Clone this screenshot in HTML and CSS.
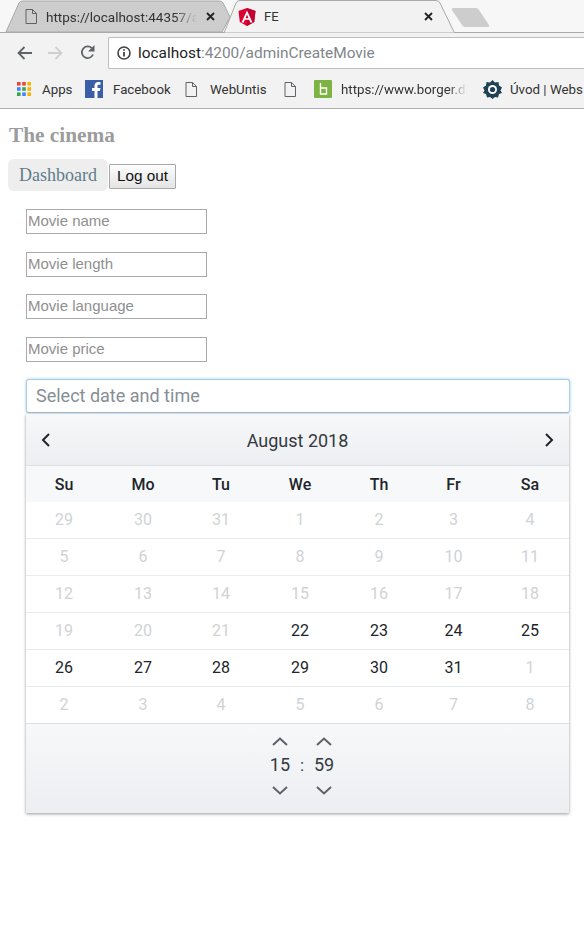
FILE: index.html
```html
<!DOCTYPE html>
<html lang="en">
<head>
    <meta charset="UTF-8">
    <meta name="viewport" content="width=device-width, initial-scale=1.0">
    <title>FE</title>
    <link rel="stylesheet" href="styles.css">
</head>
<body>

<header class="chrome">
    <div class="tabstrip">
        <svg class="tabshapes" width="584" height="33" viewBox="0 0 584 33">
            <path d="M6 32 L19 3 Q20 1 23 1 L219 1 Q222 1 223 3 L230 17 L222 32 Z" fill="#cdcdcd" stroke="#a9a9a9"/>
            <path d="M0 32.5 H224 M454 32.5 H584" stroke="#a9a9a9" fill="none"/>
            <path d="M224 33 L236 3 Q237 .5 240 .5 L436 .5 Q439 .5 440 3 L454 32 L455 33 Z" fill="#f2f2f2" stroke="#a9a9a9"/>
            <path d="M452 10 Q451 8 454 8 L476 8 Q478 8 479 10 L489 25 Q490 27 487 27 L465 27 Q463 27 462 25 Z" fill="#cdcdcd"/>
        </svg>
        <div class="tab tab-back">
            <svg class="tabicon" width="12" height="15" viewBox="0 0 12 15"><path d="M1 .5 H7.5 L11.5 4.5 V14.5 H1 Z M7.5 .5 V4.5 H11.5" fill="none" stroke="#5f6368"/></svg>
            <span class="tabtitle">https://localhost:44357/api</span>
            <svg class="tabclose" width="9" height="9" viewBox="0 0 9 9"><path d="M1 1 L8 8 M8 1 L1 8" stroke="#222" stroke-width="1.8"/></svg>
        </div>
        <div class="tab tab-front">
            <svg width="18" height="18" viewBox="0 0 18 18"><path d="M9 0 L17.5 3 L16.2 14 L9 18 L1.8 14 L.5 3 Z" fill="#dd0031"/><path d="M9 0 L17.5 3 L16.2 14 L9 18 Z" fill="#c3002f"/><path d="M9 2.500 L3.500 14.500 H5.700 L6.800 11.800 H11.200 L12.300 14.500 H14.500 Z M9 6.500 L10.500 10.200 H7.500 Z" fill="#fff" fill-rule="evenodd"/></svg>
            <span class="tabname">FE</span>
            <svg class="tabclose" width="9" height="9" viewBox="0 0 9 9"><path d="M1 1 L8 8 M8 1 L1 8" stroke="#222" stroke-width="1.8"/></svg>
        </div>
    </div>

    <div class="toolbar">
        <svg class="navicon nav-back" width="15" height="14" viewBox="0 0 15 14"><path d="M15 7 H2 M7.5 1 L1.500 7 L7.5 13" fill="none" stroke="#5f6368" stroke-width="1.800"/></svg>
        <svg class="navicon nav-fwd" width="15" height="14" viewBox="0 0 15 14"><path d="M0 7 H13 M7.5 1 L13.500 7 L7.5 13" fill="none" stroke="#cfcfcf" stroke-width="1.800"/></svg>
        <svg class="navicon nav-reload" width="15" height="15" viewBox="0 0 15 15"><path d="M13 9.500 A5.800 5.800 0 1 1 11.800 3.200" fill="none" stroke="#5f6368" stroke-width="1.800"/><path d="M14.500 0 V6.500 H8 Z" fill="#5f6368"/></svg>
        <div class="omnibox">
            <svg width="14" height="14" viewBox="0 0 14 14"><circle cx="7" cy="7" r="6" fill="none" stroke="#444" stroke-width="1.6"/><path d="M7 6 V10.5 M7 3.2 V4.8" stroke="#444" stroke-width="1.8"/></svg>
            <span class="url"><b>localhost</b>:4200/adminCreateMovie</span>
        </div>
    </div>

    <div class="bookmarks">
        <span class="bookmark bm-apps">
            <svg width="16" height="16" viewBox="0 0 16 16">
                <rect x="1" y="1" width="3.6" height="3.6" fill="#e8453c"/><rect x="6.2" y="1" width="3.6" height="3.6" fill="#e8453c"/><rect x="11.4" y="1" width="3.6" height="3.6" fill="#f4b400"/>
                <rect x="1" y="6.2" width="3.6" height="3.6" fill="#4285f4"/><rect x="6.2" y="6.2" width="3.6" height="3.6" fill="#34a853"/><rect x="11.4" y="6.2" width="3.6" height="3.6" fill="#f4b400"/>
                <rect x="1" y="11.4" width="3.6" height="3.6" fill="#34a853"/><rect x="6.2" y="11.4" width="3.6" height="3.6" fill="#4285f4"/><rect x="11.4" y="11.4" width="3.6" height="3.6" fill="#f4b400"/>
            </svg>
            Apps
        </span>
        <span class="bookmark bm-fb">
            <svg width="18" height="18" viewBox="0 0 18 18"><rect width="18" height="18" fill="#3b5ea8"/><path d="M12.5 18 V11 H15 L15.4 8 H12.5 V6.2 C12.5 5.3 12.8 4.8 14 4.8 H15.5 V2.2 C15 2.1 14.2 2 13.2 2 C11 2 9.5 3.3 9.5 5.800 V8 H7 V11 H9.500 V18 Z" fill="#fff"/></svg>
            Facebook
        </span>
        <span class="bookmark bm-web">
            <svg width="12" height="15" viewBox="0 0 12 15"><path d="M1 .5 H7.5 L11.500 4.5 V14.5 H1 Z M7.5 .5 V4.500 H11.500" fill="none" stroke="#5f6368"/></svg>
            WebUntis
        </span>
        <span class="bookmark bm-doc">
            <svg width="12" height="15" viewBox="0 0 12 15"><path d="M1 .5 H7.5 L11.500 4.5 V14.5 H1 Z M7.5 .5 V4.500 H11.500" fill="none" stroke="#5f6368"/></svg>
        </span>
        <span class="bookmark bm-borger">
            <svg width="18" height="18" viewBox="0 0 18 18"><rect width="18" height="18" rx="1" fill="#7cb342"/><path d="M6.500 3 V14 H12.500 V8 H6.500" fill="none" stroke="#fff" stroke-width="1.400"/></svg>
            <span class="bmfade">https://www.borger.dk</span>
        </span>
        <span class="bookmark bm-uvod">
            <svg width="19" height="19" viewBox="0 0 19 19"><path d="M9.500 0 L12 2.500 L15.500 2 L16 5.500 L19 7.500 L17.500 10.500 L19 13 L16 14 L15 17.500 L12 17 L9.500 19 L7 17 L4 17.500 L3 14 L0 13 L1.500 10.500 L0 7.500 L3 5.500 L3.500 2 L7 2.500 Z" fill="#1f4257"/><circle cx="9.500" cy="9.500" r="4.500" fill="#fff"/><circle cx="9.500" cy="9.500" r="2.600" fill="#1f4257"/></svg>
            Úvod | Webs
        </span>
    </div>
</header>

<main class="page">
    <h3 class="brand">The cinema</h3>
    <nav class="menu">
        <a class="menu-link">Dashboard</a>
        <button class="logout">Log out</button>
    </nav>

    <form class="movieform">
        <input class="field" placeholder="Movie name">
        <input class="field" placeholder="Movie length">
        <input class="field" placeholder="Movie language">
        <input class="field" placeholder="Movie price">

        <input class="dateinput" placeholder="Select date and time">
        <div class="calendar">
            <div class="cal-head">
                <svg width="10" height="14" viewBox="0 0 10 14"><path d="M8 1 L2 7 L8 13" fill="none" stroke="#212529" stroke-width="2"/></svg>
                <span class="cal-month">August 2018</span>
                <svg width="10" height="14" viewBox="0 0 10 14"><path d="M2 1 L8 7 L2 13" fill="none" stroke="#212529" stroke-width="2"/></svg>
            </div>
            <table class="days">
                <colgroup>
                    <col class="c76"><col class="c82"><col class="c74"><col class="c84"><col class="c74"><col class="c75"><col class="c78">
                </colgroup>
                <thead>
                    <tr><th>Su</th><th>Mo</th><th>Tu</th><th>We</th><th>Th</th><th>Fr</th><th>Sa</th></tr>
                </thead>
                <tbody>
                    <tr class="off"><td>29</td><td>30</td><td>31</td><td>1</td><td>2</td><td>3</td><td>4</td></tr>
                    <tr class="off"><td>5</td><td>6</td><td>7</td><td>8</td><td>9</td><td>10</td><td>11</td></tr>
                    <tr class="off"><td>12</td><td>13</td><td>14</td><td>15</td><td>16</td><td>17</td><td>18</td></tr>
                    <tr class="off"><td>19</td><td>20</td><td>21</td><td class="on">22</td><td class="on">23</td><td class="on">24</td><td class="on">25</td></tr>
                    <tr class="off"><td class="on">26</td><td class="on">27</td><td class="on">28</td><td class="on">29</td><td class="on">30</td><td class="on">31</td><td>1</td></tr>
                    <tr class="off"><td>2</td><td>3</td><td>4</td><td>5</td><td>6</td><td>7</td><td>8</td></tr>
                </tbody>
            </table>
            <div class="cal-time">
                <div class="spin">
                    <svg width="16" height="9" viewBox="0 0 16 9"><path d="M1 8 L8 1.500 L15 8" fill="none" stroke="#5a6268" stroke-width="2"/></svg>
                    <span>15</span>
                    <svg width="16" height="9" viewBox="0 0 16 9"><path d="M1 1 L8 7.500 L15 1" fill="none" stroke="#5a6268" stroke-width="2"/></svg>
                </div>
                <span class="colon">:</span>
                <div class="spin">
                    <svg width="16" height="9" viewBox="0 0 16 9"><path d="M1 8 L8 1.500 L15 8" fill="none" stroke="#5a6268" stroke-width="2"/></svg>
                    <span>59</span>
                    <svg width="16" height="9" viewBox="0 0 16 9"><path d="M1 1 L8 7.500 L15 1" fill="none" stroke="#5a6268" stroke-width="2"/></svg>
                </div>
            </div>
        </div>
    </form>
</main>

</body>
</html>
```

FILE: styles.css
```css
html, body {
    margin: 0;
    background-color: #ffffff;
}

body {
    height: 925px;
    overflow: hidden;
    font-family: "Liberation Sans", sans-serif;
}

/* browser frame */
.chrome {
    background-color: #f2f2f2;
    border-bottom: 1px solid #b0b0b0;
    font-family: Roboto, sans-serif;
    color: #333333;
}

.tabstrip {
    position: relative;
    display: flex;
    height: 33px;
    background-color: #f7f7f7;
}

.tabshapes {
    position: absolute;
    left: 0;
    top: 0;
}

.tab {
    position: relative;
    display: flex;
    align-items: center;
    height: 33px;
    font-size: 13px;
    box-sizing: border-box;
}

.tab-back {
    width: 224px;
    padding-left: 25px;
}

.tab-front {
    width: 215px;
    padding-left: 14px;
}

.tabicon {
    flex: none;
}

.tabtitle {
    width: 151px;
    margin-left: 9px;
    overflow: hidden;
    white-space: nowrap;
    font-size: 13.5px;
    -webkit-mask-image: linear-gradient(to right, #000 85%, transparent);
    mask-image: linear-gradient(to right, #000 85%, transparent);
}

.tabname {
    margin-left: 8px;
    flex: 1;
}

.tabclose {
    flex: none;
    margin-left: 9px;
}

.tab-front .tabclose {
    margin-right: 6px;
}

.toolbar {
    display: flex;
    align-items: center;
    height: 39px;
}

.navicon {
    flex: none;
}

.nav-back { margin-left: 17px; }
.nav-fwd { margin-left: 16px; }
.nav-reload { margin-left: 17px; }

.omnibox {
    display: flex;
    align-items: center;
    gap: 7px;
    flex: 1;
    height: 30px;
    margin-left: 13px;
    padding-left: 8px;
    background-color: #ffffff;
    border: 1px solid #bdbdbd;
    border-right: 0;
    border-radius: 2px 0 0 2px;
}

.url {
    font-size: 15.4px;
    color: #80868b;
    white-space: nowrap;
}

.url b {
    font-weight: normal;
    color: #222222;
}

.bookmarks {
    display: flex;
    align-items: center;
    height: 36px;
    box-sizing: border-box;
    padding-bottom: 2px;
    overflow: hidden;
    font-size: 13.3px;
    white-space: nowrap;
}

.bookmark {
    display: flex;
    align-items: center;
    flex: none;
}

.bm-apps { margin-left: 16px; gap: 10px; width: 69px; }
.bm-fb { gap: 10px; width: 100px; }
.bm-web { gap: 13px; width: 99px; }
.bm-doc { width: 30px; }
.bm-borger { gap: 9px; width: 169px; }
.bm-uvod { gap: 8px; }

.bmfade {
    width: 126px;
    overflow: hidden;
    -webkit-mask-image: linear-gradient(to right, #000 85%, transparent);
    mask-image: linear-gradient(to right, #000 85%, transparent);
}

/* page */
.page {
    padding: 0 8px;
}

.brand {
    margin: 0;
    padding-top: 14px;
    padding-left: 1px;
    font-family: "Liberation Serif", serif;
    font-size: 21.3px;
    line-height: 24px;
    color: #9c9c9c;
}

.menu {
    display: flex;
    align-items: center;
    margin-top: 12px;
}

.menu-link {
    display: block;
    width: 100px;
    height: 32px;
    box-sizing: border-box;
    padding-left: 11px;
    background-color: #eeeeee;
    border-radius: 6px;
    font-family: "Liberation Serif", serif;
    font-size: 18px;
    line-height: 32px;
    color: #607d8b;
}

.logout {
    width: 67px;
    height: 25px;
    margin: 2px 0 0 1px;
    padding: 0;
    border: 1px solid #a8a8a8;
    border-radius: 1px;
    background: linear-gradient(#fdfdfd, #e4e4e4);
    font-family: "Liberation Sans", sans-serif;
    font-size: 15.3px;
    color: #111111;
}

.movieform {
    display: flex;
    flex-direction: column;
    align-items: flex-start;
    padding-left: 18px;
    margin-top: 18px;
}

.field {
    width: 181px;
    height: 25px;
    box-sizing: border-box;
    margin-bottom: 17.6px;
    padding: 0 1px 2px;
    border: 1px solid #ababab;
    border-radius: 0;
    outline: none;
    font-family: "Liberation Sans", sans-serif;
    font-size: 15px;
}

.field::placeholder {
    color: #8f8f8f;
}

.dateinput {
    width: 544px;
    height: 34px;
    box-sizing: border-box;
    padding: 0 9px 2px;
    border: 1px solid #a9cfe6;
    border-bottom-color: #a9bcc9;
    border-radius: 3px;
    box-shadow: 0 0 3px rgba(110, 175, 225, 0.7);
    outline: none;
    font-family: Roboto, sans-serif;
    font-size: 18px;
}

.dateinput::placeholder {
    color: #868e96;
}

.calendar {
    width: 543px;
    margin-top: 1px;
    box-shadow: 0 1px 3px rgba(0, 0, 0, 0.4);
    font-family: Roboto, sans-serif;
    color: #212529;
}

.cal-head {
    display: flex;
    align-items: center;
    justify-content: space-between;
    height: 52px;
    padding: 1px 15px 0;
    background: linear-gradient(#f7f8fa, #eceef1);
    border-bottom: 1px solid #dcdfe3;
    box-sizing: border-box;
}

.cal-month {
    font-size: 18px;
    color: #343a40;
}

.days {
    width: 543px;
    table-layout: fixed;
    border-collapse: collapse;
    background-color: #ffffff;
}

.c74 { width: 74px; }
.c75 { width: 75px; }
.c76 { width: 76px; }
.c78 { width: 78px; }
.c82 { width: 82px; }
.c84 { width: 84px; }

.days th {
    height: 36px;
    padding: 0;
    background-color: #f7f8fa;
    font-size: 16px;
    font-weight: 500;
}

.days td {
    height: 37px;
    box-sizing: border-box;
    padding: 0;
    border-top: 1px solid #e9ecef;
    text-align: center;
    font-size: 16px;
    color: #d0d3d6;
}

.days tbody tr:first-child td {
    height: 36px;
    padding-bottom: 2px;
    border-top: 0;
}

.days tbody tr:last-child td {
    padding-bottom: 2px;
}

.days td.on {
    color: #212529;
}

.cal-time {
    display: flex;
    justify-content: center;
    align-items: center;
    gap: 5px;
    height: 90px;
    box-sizing: border-box;
    padding: 0 0 6px 9px;
    background: linear-gradient(#f7f8fa, #eceef1);
    border-top: 1px solid #dcdfe3;
    font-size: 18px;
    color: #343a40;
}

.spin {
    display: flex;
    flex-direction: column;
    align-items: center;
    gap: 9px;
    width: 30px;
}

.spin span {
    line-height: 21px;
    margin-top: -1px;
    margin-bottom: 2px;
}

.colon {
    font-size: 17px;
    margin-top: -1px;
}
```
